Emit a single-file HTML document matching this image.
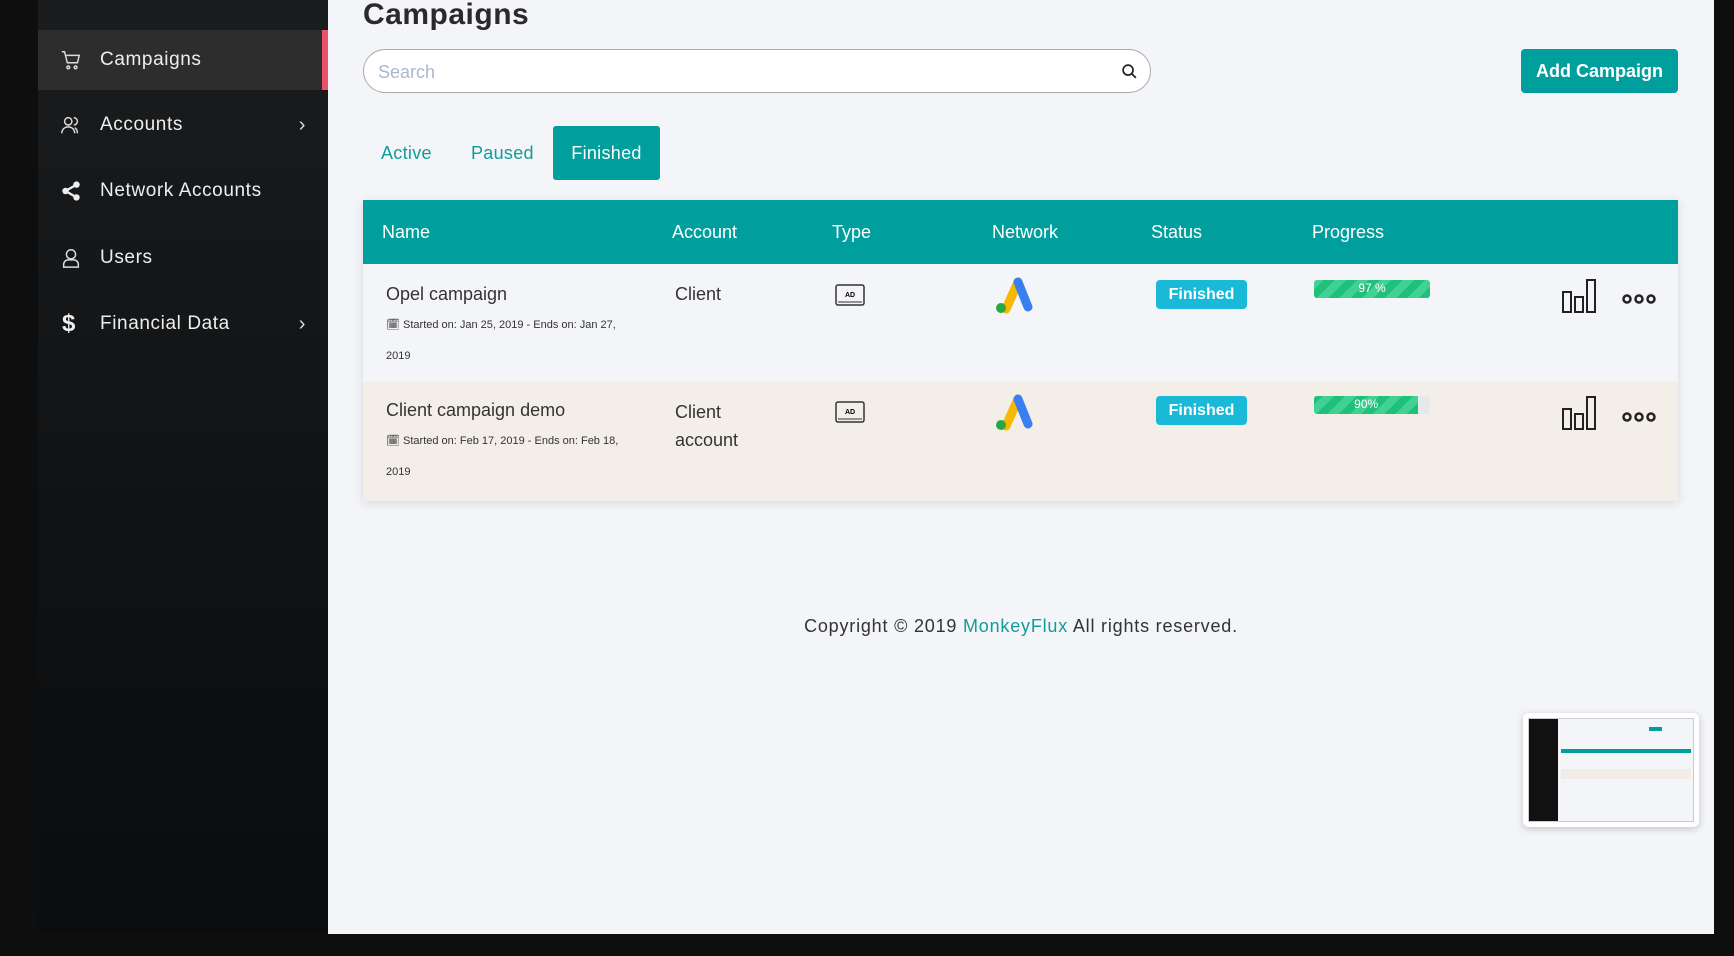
<!DOCTYPE html>
<html><head><meta charset="utf-8"><style>
*{box-sizing:border-box;margin:0;padding:0}
body{width:1734px;height:956px;background:#0e0e0e;font-family:"Liberation Sans",sans-serif;position:relative;overflow:hidden}
.side{position:absolute;left:38px;top:0;width:290px;height:934px;background:linear-gradient(180deg,#1a1c1e,#0f1214 60%,#0a0d0f);}
.side .item{position:absolute;left:0;width:290px;height:60px;color:#eee;font-size:19px;display:flex;align-items:center;padding-left:62px;letter-spacing:.6px}
.side .item svg{position:absolute;left:22px}
.side .act{background:#2e2d2e}
.side .act:after{content:"";position:absolute;right:0;top:0;width:6px;height:100%;background:#e9506a}
.chev{position:absolute;right:22px;font-size:20px;color:#ddd}
.main{position:absolute;left:328px;top:0;width:1386px;height:934px;background:#f3f5f9}
h1{position:absolute;left:35px;top:-2px;font-size:30px;font-weight:bold;color:#2a2a2a;letter-spacing:.5px}
.search{position:absolute;left:35px;top:49px;width:788px;height:44px;border:1.5px solid #aaa;border-radius:22px;background:#fff;font-size:18px;color:#aab8cc;padding:12px 14px}
.btn{position:absolute;left:1193px;top:49px;width:157px;height:44px;background:#009e9d;border-radius:4px;color:#fff;font-size:18px;font-weight:bold;text-align:center;line-height:44px}
.tab{position:absolute;top:126px;height:54px;line-height:54px;font-size:18px;color:#129b98;letter-spacing:.3px}
.table{position:absolute;left:35px;top:200px;width:1315px;height:301px;box-shadow:0 2px 10px rgba(0,0,0,.12)}
.hd{height:64px;background:#009e9d;color:#fff;font-size:18px;position:relative}
.hd span,.row span{position:absolute}
.row{height:118px;position:relative;color:#333;font-size:18px}
.small{font-size:11px;color:#333}
.badge{background:#1ab9d8;color:#fff;font-weight:bold;font-size:16px;border-radius:4px;width:91px;height:29px;line-height:29px;text-align:center}
.prog{width:116px;height:18px;border-radius:3px;background:#e6e9ec;overflow:hidden}
.prog div{height:100%;background:repeating-linear-gradient(-45deg,#1fc07a 0 8px,#42d195 8px 16px);color:#fff;font-size:12px;text-align:center;line-height:16px}
</style></head><body>
<div class="side">
<div class="item act" style="top:30px"><svg width="22" height="22" viewBox="0 0 24 24" fill="none" stroke="#ddd" stroke-width="1.6"><path d="M2 3h3l3 12h11l2-8H7"/><circle cx="9" cy="20" r="1.5"/><circle cx="17" cy="20" r="1.5"/></svg>Campaigns</div>
<div class="item" style="top:95px"><svg width="22" height="22" viewBox="0 0 24 24" fill="none" stroke="#ddd" stroke-width="1.6"><circle cx="9" cy="8" r="4"/><path d="M2 21c0-4 3-7 7-7s7 3 7 7M15 4a4 4 0 010 8M19 21c0-3-1-5-3-6"/></svg>Accounts<span class="chev">›</span></div>
<div class="item" style="top:161px"><svg width="22" height="22" viewBox="0 0 24 24" fill="#eee"><circle cx="18" cy="5" r="3.5"/><circle cx="6" cy="12" r="3.5"/><circle cx="18" cy="19" r="3.5"/><path d="M6 12L18 5M6 12l12 7" stroke="#eee" stroke-width="2.5"/></svg>Network Accounts</div>
<div class="item" style="top:228px"><svg width="22" height="22" viewBox="0 0 24 24" fill="none" stroke="#ddd" stroke-width="1.6"><circle cx="12" cy="8" r="5"/><path d="M4 22v-3a5 5 0 015-5h6a5 5 0 015 5v3z"/></svg>Users</div>
<div class="item" style="top:294px"><span style="position:absolute;left:24px;font-size:24px;font-weight:bold">$</span>Financial Data<span class="chev">›</span></div>
</div>
<div class="main">
<h1>Campaigns</h1>
<div class="search">Search<svg style="position:absolute;right:12px;top:13px" width="17" height="17" viewBox="0 0 24 24" fill="none" stroke="#222" stroke-width="2.4"><circle cx="10" cy="10" r="7"/><path d="M15 15l6 6"/></svg></div>
<div class="btn">Add Campaign</div>
<div class="tab" style="left:53px">Active</div>
<div class="tab" style="left:143px">Paused</div>
<div class="tab" style="left:225px;width:107px;background:#009e9d;color:#fff;text-align:center;border-radius:3px">Finished</div>
<div class="table">
<div class="hd"><span style="left:19px;top:22px">Name</span><span style="left:309px;top:22px">Account</span><span style="left:469px;top:22px">Type</span><span style="left:629px;top:22px">Network</span><span style="left:788px;top:22px">Status</span><span style="left:949px;top:22px">Progress</span></div>
<div class="row" style="background:#f4f5f9">
<span style="left:23px;top:20px">Opel campaign</span>
<span class="small" style="left:23px;top:54px">🗓 Started on: Jan 25, 2019 - Ends on: Jan 27,</span>
<span class="small" style="left:23px;top:86px">2019</span>
<span style="left:312px;top:20px">Client</span>
<span style="left:472px;top:20px"><svg width="30" height="22"><rect x="1" y="1" width="28" height="20" rx="2" fill="none" stroke="#333" stroke-width="1.5"/><text x="15" y="13" font-size="7" text-anchor="middle" font-family="Liberation Sans" font-weight="bold">AD</text><path d="M3 18h24" stroke="#333"/></svg></span>
<span style="left:630px;top:12px"><svg width="40" height="38" viewBox="0 0 40 38"><path d="M13 33L25 6" stroke="#f6b900" stroke-width="9" stroke-linecap="round"/><path d="M25 6l10 25" stroke="#3a7ff0" stroke-width="9" stroke-linecap="round"/><circle cx="8" cy="32" r="5" fill="#28a745"/></svg></span>
<span class="badge" style="left:793px;top:16px">Finished</span>
<span class="prog" style="left:951px;top:16px"><div style="width:100%">97 %</div></span>
<span style="left:1199px;top:14px"><svg width="36" height="36" viewBox="0 0 36 36" fill="none" stroke="#222" stroke-width="2"><rect x="1" y="14" width="8" height="20"/><rect x="13" y="19" width="8" height="15"/><rect x="25" y="2" width="8" height="32"/></svg></span>
<span style="left:1259px;top:25px"><svg width="34" height="12"><g fill="none" stroke="#222" stroke-width="2.5"><circle cx="5" cy="6" r="3.5"/><circle cx="17" cy="6" r="3.5"/><circle cx="29" cy="6" r="3.5"/></g></svg></span>
</div>
<div class="row" style="background:#f3eee8;height:119px">
<span style="left:23px;top:18px">Client campaign demo</span>
<span class="small" style="left:23px;top:52px">🗓 Started on: Feb 17, 2019 - Ends on: Feb 18,</span>
<span class="small" style="left:23px;top:84px">2019</span>
<span style="left:312px;top:16px;line-height:28px">Client<br>account</span>
<span style="left:472px;top:19px"><svg width="30" height="22"><rect x="1" y="1" width="28" height="20" rx="2" fill="none" stroke="#333" stroke-width="1.5"/><text x="15" y="13" font-size="7" text-anchor="middle" font-family="Liberation Sans" font-weight="bold">AD</text><path d="M3 18h24" stroke="#333"/></svg></span>
<span style="left:630px;top:11px"><svg width="40" height="38" viewBox="0 0 40 38"><path d="M13 33L25 6" stroke="#f6b900" stroke-width="9" stroke-linecap="round"/><path d="M25 6l10 25" stroke="#3a7ff0" stroke-width="9" stroke-linecap="round"/><circle cx="8" cy="32" r="5" fill="#28a745"/></svg></span>
<span class="badge" style="left:793px;top:14px">Finished</span>
<span class="prog" style="left:951px;top:14px"><div style="width:90%">90%</div></span>
<span style="left:1199px;top:13px"><svg width="36" height="36" viewBox="0 0 36 36" fill="none" stroke="#222" stroke-width="2"><rect x="1" y="14" width="8" height="20"/><rect x="13" y="19" width="8" height="15"/><rect x="25" y="2" width="8" height="32"/></svg></span>
<span style="left:1259px;top:25px"><svg width="34" height="12"><g fill="none" stroke="#222" stroke-width="2.5"><circle cx="5" cy="6" r="3.5"/><circle cx="17" cy="6" r="3.5"/><circle cx="29" cy="6" r="3.5"/></g></svg></span>
</div>
</div>
<div style="position:absolute;left:0;width:1386px;top:616px;text-align:center;font-size:18px;color:#333;letter-spacing:.8px">Copyright © 2019 <span style="color:#129b98">MonkeyFlux</span> All rights reserved.</div>
<div style="position:absolute;left:1195px;top:713px;width:176px;height:114px;background:#fff;border-radius:6px;box-shadow:0 2px 8px rgba(0,0,0,.2);padding:5px">
<div style="position:relative;width:166px;height:104px;background:#f3f5f9;border:1px solid #ccc">
<div style="position:absolute;left:0;top:0;width:29px;height:102px;background:#111"></div>
<div style="position:absolute;left:32px;top:30px;width:130px;height:4px;background:#009e9d"></div>
<div style="position:absolute;left:32px;top:50px;width:130px;height:10px;background:#f1ece6"></div>
<div style="position:absolute;left:120px;top:8px;width:13px;height:4px;background:#009e9d"></div>
</div></div>
</div>
</body></html>
